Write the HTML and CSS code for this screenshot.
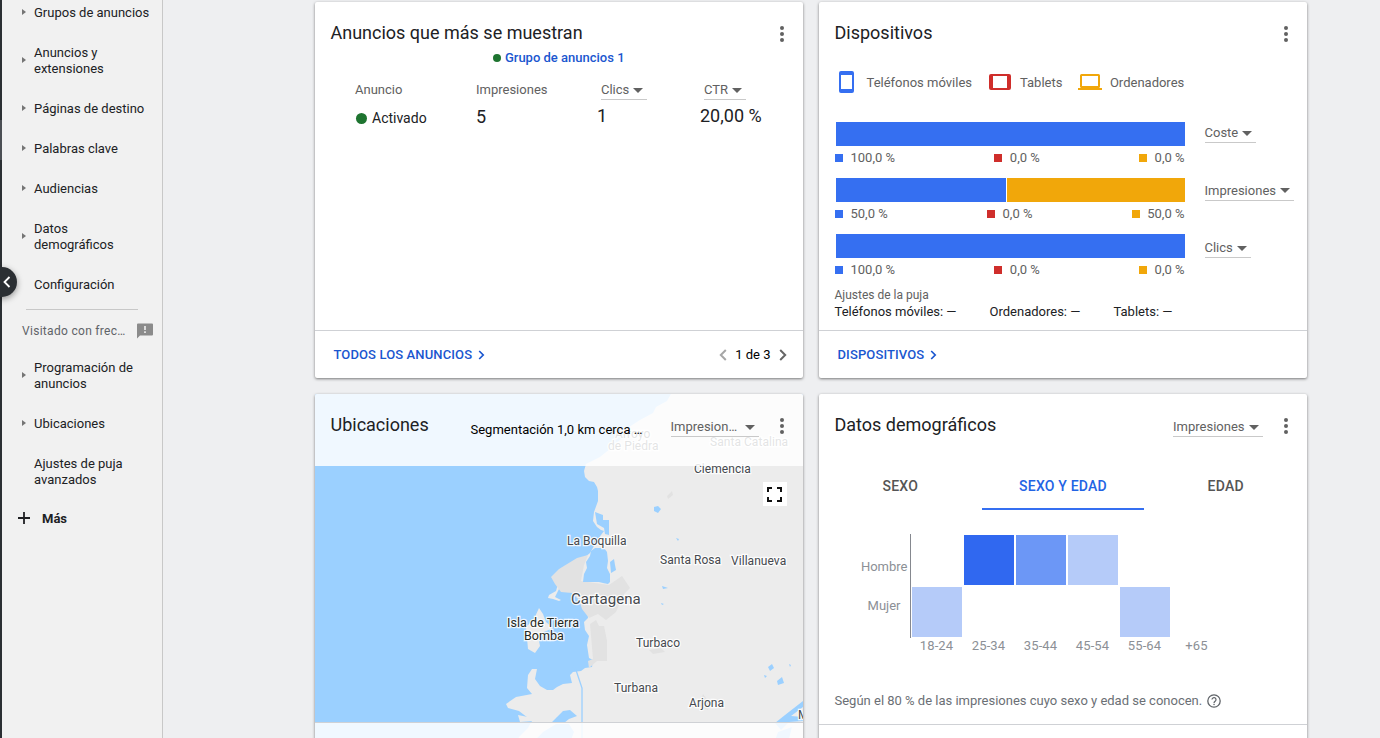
FILE: index.html
```html
<!DOCTYPE html>
<html lang="es">
<head>
<meta charset="utf-8">
<title>Vista general</title>
<link rel="stylesheet" href="styles.css">
</head>
<body>
<div class="app">
  <div class="rail"><div class="rail-mark"></div></div>
  <nav class="side">
    <ul class="menu">
      <li class="has-arrow">Grupos de anuncios</li>
      <li class="has-arrow two">Anuncios y extensiones</li>
      <li class="has-arrow">Páginas de destino</li>
      <li class="has-arrow">Palabras clave</li>
      <li class="has-arrow">Audiencias</li>
      <li class="has-arrow two">Datos demográficos</li>
      <li>Configuración</li>
    </ul>
    <div class="side-rule"></div>
    <div class="visited"><span>Visitado con frec…</span>
      <svg width="16" height="16" viewBox="0 0 16 16"><path fill="#8b8b8b" d="M1 .5h14a1 1 0 0 1 1 1v10a1 1 0 0 1-1 1H3L0 15.500V1.500a1 1 0 0 1 1-1z"/><path fill="#f1f1f1" d="M7.200 3h1.600v4H7.200zM7.200 8.300h1.600v1.600H7.200z"/></svg>
    </div>
    <ul class="menu">
      <li class="has-arrow two">Programación de anuncios</li>
      <li class="has-arrow">Ubicaciones</li>
      <li class="two">Ajustes de puja avanzados</li>
    </ul>
    <div class="more"><svg width="12" height="12" viewBox="0 0 12 12"><path d="M6 0v12M0 6h12" stroke="#202124" stroke-width="1.800"/></svg><span>Más</span></div>
  </nav>
  <button class="collapse" aria-label="Contraer"><svg width="8" height="12" viewBox="0 0 8 12"><path d="M6.500 1L1.500 6l5 5" fill="none" stroke="#fff" stroke-width="1.800"/></svg></button>

  <main class="board">
    <section class="card">
      <header class="card-head"><h2>Anuncios que más se muestran</h2><span class="dots"><i></i><i></i><i></i></span></header>
      <div class="group"><i class="dot small"></i><b>Grupo de anuncios 1</b></div>
      <div class="ads">
        <span>Anuncio</span><span>Impresiones</span>
        <span class="inset"><span class="drop">Clics</span></span><span class="inset"><span class="drop">CTR</span></span>
        <span class="status"><i class="dot"></i>Activado</span><span class="num five">5</span><span class="num">1</span><span class="num">20,00 %</span>
      </div>
      <footer class="card-foot">
        <a>TODOS LOS ANUNCIOS<svg width="7" height="10" viewBox="0 0 7 10"><path d="M1.200 1l4 4-4 4" fill="none" stroke="currentColor" stroke-width="1.700"/></svg></a>
        <div class="pager"><svg width="8" height="12" viewBox="0 0 8 12"><path d="M6.800 1L1.800 6l5 5" fill="none" stroke="#a6a6a6" stroke-width="2"/></svg><span>1 de 3</span><svg width="8" height="12" viewBox="0 0 8 12"><path d="M1.200 1l5 5-5 5" fill="none" stroke="#666" stroke-width="2"/></svg></div>
      </footer>
    </section>

    <section class="card">
      <header class="card-head"><h2>Dispositivos</h2><span class="dots"><i></i><i></i><i></i></span></header>
      <div class="devices">
        <svg width="15" height="22" viewBox="0 0 15 22"><path fill="#356ff1" fill-rule="evenodd" d="M2 0h11a2 2 0 0 1 2 2v18a2 2 0 0 1-2 2H2a2 2 0 0 1-2-2V2a2 2 0 0 1 2-2zM2 4v14h11V4z"/></svg>
        <span class="l1">Teléfonos móviles</span>
        <svg width="22" height="16" viewBox="0 0 22 16"><path fill="#cf2e2b" fill-rule="evenodd" d="M2 0h18a2 2 0 0 1 2 2v12a2 2 0 0 1-2 2H2a2 2 0 0 1-2-2V2a2 2 0 0 1 2-2zM4 2v12h14V2z"/></svg>
        <span class="l2">Tablets</span>
        <svg width="24" height="16" viewBox="0 0 24 16"><path fill="#f1a70a" fill-rule="evenodd" d="M3.500 0h17a1.500 1.500 0 0 1 1.500 1.500v11a1.500 1.500 0 0 1-1.500 1.500H24v2H0v-2h3.500A1.500 1.500 0 0 1 2 12.500v-11A1.500 1.500 0 0 1 3.500 0zM4 2v10h16V2z"/></svg>
        <span class="l3">Ordenadores</span>
      </div>
      <div class="metrics">
        <div class="bars">
          <div class="bar"><i class="blue" style="flex-grow:1"></i></div>
          <div class="legend"><span class="blue">100,0 %</span><span class="red">0,0 %</span><span class="gold">0,0 %</span></div>
          <div class="bar"><i class="blue" style="flex-grow:170"></i><i class="gold" style="flex-grow:178"></i></div>
          <div class="legend"><span class="blue">50,0 %</span><span class="red">0,0 %</span><span class="gold">50,0 %</span></div>
          <div class="bar"><i class="blue" style="flex-grow:1"></i></div>
          <div class="legend"><span class="blue">100,0 %</span><span class="red">0,0 %</span><span class="gold">0,0 %</span></div>
        </div>
        <div class="picks"><span class="drop">Coste</span><span class="drop">Impresiones</span><span class="drop">Clics</span></div>
      </div>
      <div class="bids"><p>Ajustes de la puja</p><div class="bid-row"><span>Teléfonos móviles: —</span><span>Ordenadores: —</span><span>Tablets: —</span></div></div>
      <footer class="card-foot">
        <a>DISPOSITIVOS<svg width="7" height="10" viewBox="0 0 7 10"><path d="M1.200 1l4 4-4 4" fill="none" stroke="currentColor" stroke-width="1.700"/></svg></a>
      </footer>
    </section>

    <section class="card map-card">
      <svg class="map" width="488" height="360" viewBox="315 394 488 360">
        <rect x="315" y="394" width="488" height="360" fill="#9bd0ff"/>
        <path fill="#ececec" d="M671 394L667 401 656 407 653 413 640 420 626 429 622 438 610 449 600 457 586 464 584 471 585 477 589 481 594 482 597 487 598 491 598 501 594 512 593 521 597 527 601 530 604 531 598 539 590 553 579 562 568 569 556 575 555 580 558 584 556 591 549 595 548 598 553 599 559 601 561 600 555 597 559 589 558 583 562 580 566 583 565 585 567 589 576 590 578 588 574 584 577 585 580 590 583 597 583 601 587 608 588 618 584 622 585 630 589 636 587 645 589 658 593 660 592 667 585 668 581 671 573 672 570 675 572 683 563 684 557 687 553 690 547 690 540 686 535 679 537 669 532 669 528 675 527 688 532 694 516 697 506 704 508 708 519 711 532 721 528 728 519 737 515 754H803V394z"/>
        <path fill="#ececec" d="M539 608l4 6 3 8 7 6-9 4-5 9 1 5-5 7-7-4-2-22 8-8zM518 715l10 2 6 4-14 1z"/>
        <g fill="#e2e2e2"><path d="M588 555l-4 10-3 16 28 4 13-9 8 12-6 6-8 18-10 8-8-6-9 4-7-9-3-9-7-7-11-1-6-8-4-7 8-8 18-11z"/><path d="M590 624l6-4 3 6 5 0 3 15v20h-10l-8 7-1-7 5-2z"/><path d="M667 496l5-5 1 4-5 4zM649 650l12-2 4 4-12 2zM698 706l5-12 7 10-2 6z"/></g>
        <g fill="#9bd0ff"><path d="M595 512l8 3 0 5 6 0v15l-4-1-1-6-7-4z"/><path d="M591 551l4-3 9 0 3 4 1 9-1 7 3 6 0 8-2 2-5-1-4-1-16 0 1-8 3-6-1-6 4-6z"/><path d="M610 562l4-3 1 6 1 5-5 3zM654 507l4-1 3 3-3 4-4-2zM676 538l3 1-1 2zM662 586l6 2-5 1zM661 603l3 1-2 1zM768 667l4-3 2 4-4 3zM777 681l5-4 2 6-6 2zM764 675l3 1-2 2zM789 664l2 1-1 2z"/><path d="M551 723l6-6 6-6 7-1 7 6-8 3-5 4z"/><path d="M573 666l3 4 6 18v50" fill="none" stroke="#9bd0ff" stroke-width="1.300"/><path d="M775 723l10-8 18-14v6l-12 9 12 1v4l-14 1-8 8z"/><path d="M533 742l10-10 13-8 13 0 5 8-8 22h-34zM770 754l8-22 14-5-3 12z"/></g>
        <g class="place">
          <text x="615" y="438">Arroyo</text><text x="608" y="450.400">de Piedra</text><text x="710" y="446">Santa Catalina</text><text x="694" y="473">Clemencia</text><text x="567" y="545.400">La Boquilla</text><text x="660" y="564.400">Santa Rosa</text><text x="731" y="565.400">Villanueva</text><text x="636" y="647.400">Turbaco</text><text x="614" y="692.400">Turbana</text><text x="689" y="707.400">Arjona</text><text x="798" y="719">M</text>
          <text class="isle" x="507" y="627.400">Isla de Tierra</text><text class="isle" x="524" y="640.400">Bomba</text><text class="city" x="571" y="604.400">Cartagena</text>
        </g>
      </svg>
      <header class="card-head veil"><h2>Ubicaciones</h2><span class="segment">Segmentación 1,0 km cerca …</span><span class="drop wide">Impresion…</span><span class="dots"><i></i><i></i><i></i></span></header>
      <div class="full"><svg width="15" height="15" viewBox="0 0 15 15"><path d="M1 5V1h4M10 1h4v4M14 10v4h-4M5 14H1v-4" fill="none" stroke="#111" stroke-width="2"/></svg></div>
      <div class="map-foot"></div>
    </section>

    <section class="card">
      <header class="card-head"><h2>Datos demográficos</h2><span class="drop">Impresiones</span><span class="dots"><i></i><i></i><i></i></span></header>
      <div class="tabs"><span>SEXO</span><span class="on">SEXO Y EDAD</span><span>EDAD</span></div>
      <div class="chart">
        <div class="ylab"><span>Hombre</span><span class="m">Mujer</span></div>
        <div class="heat">
          <i></i><i class="h3"></i><i class="h2"></i><i class="h1"></i><i></i><i></i>
          <i class="h1"></i><i></i><i></i><i></i><i class="h1"></i><i></i>
        </div>
        <div class="xlab"><span>18-24</span><span>25-34</span><span>35-44</span><span>45-54</span><span>55-64</span><span>+65</span></div>
      </div>
      <div class="note">Según el 80 % de las impresiones cuyo sexo y edad se conocen.
        <svg width="14" height="14" viewBox="0 0 14 14"><circle cx="7" cy="7" r="6.200" fill="none" stroke="#5f6368" stroke-width="1.300"/><path d="M5 5.600a2 2 0 1 1 3.300 1.500C7.500 7.700 7 8 7 8.900" fill="none" stroke="#5f6368" stroke-width="1.200"/><rect x="6.400" y="9.800" width="1.300" height="1.300" fill="#5f6368"/></svg>
      </div>
      <div class="end"></div>
    </section>
  </main>
</div>
</body>
</html>
```

FILE: styles.css
```css
* { box-sizing: border-box; }
body { margin: 0; height: 738px; overflow: hidden; background: #eeeff1; font: 13px/16px Roboto, "Liberation Sans", sans-serif; color: #202124; }
h2, p, ul { margin: 0; padding: 0; list-style: none; }
svg { display: block; flex: none; }
.app { position: relative; display: flex; height: 738px; }

.rail { width: 2px; padding-top: 120px; background: #2b2f33; }
.rail-mark { height: 40px; background: #4b4f54; }
.side { width: 161px; border-right: 1px solid #c8c8c8; background: #f1f1f1; overflow: hidden; }
.side > .menu:first-child { margin-top: -7px; }
.menu li { display: flex; align-items: center; position: relative; height: 40px; padding: 0 22px 0 32px; white-space: nowrap; }
.menu li.two { height: 56px; white-space: normal; }
.has-arrow::before { content: ""; position: absolute; left: 20px; top: calc(50% - 4px); border: 3.500px solid transparent; border-left: 4px solid #757575; border-right: 0; }
.side-rule { margin: 4px 24px 0; height: 1px; background: #c8c8c8; }
.visited { display: flex; align-items: center; justify-content: space-between; height: 38px; padding: 4px 9px 0 20px; font-size: 12px; letter-spacing: .3px; color: #5f6368; }
.more { display: flex; align-items: center; gap: 12px; height: 38px; padding-left: 16px; font-weight: 700; }
.more svg { margin-top: -2px; }
.collapse { position: absolute; left: -13px; top: 267px; width: 30px; height: 30px; border: 0; padding: 0 0 0 16px; border-radius: 50%; background: #2b2f33; box-shadow: 0 2px 6px rgba(0,0,0,.4); }

.board { display: grid; grid-template-columns: 488px 488px; grid-template-rows: 376px 360px; gap: 16px; padding: 2px 0 0 152px; }
.card { display: flex; flex-direction: column; overflow: hidden; border-radius: 2px; background: #fff; box-shadow: 0 1px 3px rgba(0,0,0,.5); }
.card-head { display: flex; flex: none; height: 43px; padding: 19px 17px 0 15.500px; }
h2 { flex: 1; font-size: 18px; font-weight: 400; line-height: 24px; white-space: nowrap; }
.dots { display: flex; flex-direction: column; gap: 2px; padding-top: 5px; width: 8px; align-items: center; }
.dots i { width: 4px; height: 4px; border-radius: 50%; background: #616161; }
.drop { display: inline-flex; align-items: center; gap: 4px; height: 18px; padding: 0 4px 1px 0; border-bottom: 1px solid #c9c9c9; color: #616161; white-space: nowrap; }
.drop::after { content: ""; border: 5px solid transparent; border-top-color: #616161; border-bottom: 0; }
.card-foot { display: flex; align-items: center; justify-content: space-between; height: 48px; margin-top: auto; padding: 0 16px 0 18.500px; border-top: 1px solid #cfd1d5; }
.card-foot a { display: flex; align-items: center; gap: 6px; font-weight: 500; letter-spacing: .12px; color: #1a56cf; }
.pager { display: flex; align-items: center; gap: 8.500px; color: #000; }

.group { display: flex; justify-content: center; align-items: center; gap: 3.500px; margin-top: 5px; color: #1a56cf; }
.group b { font-weight: 500; }
.dot { width: 11px; height: 11px; margin-right: 5px; border-radius: 50%; background: #1e7430; }
.dot.small { width: 8px; height: 8px; margin: 0; }
.ads { display: grid; grid-template-columns: 121px 121px 103px auto; grid-template-rows: 18px 24px; row-gap: 5px; margin: 15px 0 0 40px; color: #616161; line-height: 18px; }
.inset { padding-left: 4px; }
.status { display: flex; align-items: center; padding: 4px 0 0 1px; font-size: 14px; color: #202124; }
.num { font-size: 18px; line-height: 24px; color: #202124; }
.five { padding-top: 1px; }

.devices { display: flex; align-items: center; height: 24px; margin: 25px 0 0 20px; color: #616161; }
.devices span { padding-top: 2px; }
.l1 { margin: 0 17.500px 0 12.500px; }
.l2 { margin: 0 15.500px 0 8.500px; }
.l3 { margin-left: 8px; }
.metrics { display: flex; gap: 19.500px; margin: 28px 0 0 16px; }
.bars { width: 350px; }
.bar { display: flex; gap: 1px; height: 24px; margin-left: 1px; }
.blue { --c: #356ff1; }
.red { --c: #cf2e2b; }
.gold { --c: #f1a70a; }
.bar i { flex-basis: 0; background: var(--c); }
.legend { display: flex; justify-content: space-between; height: 32px; padding: 4px .5px 0 0; color: #616161; }
.legend span { display: flex; gap: 7.500px; height: 16px; align-items: center; }
.legend span::before { content: ""; width: 8px; height: 8px; background: var(--c); }
.picks { display: flex; flex-direction: column; align-items: flex-start; gap: 39.500px; padding-top: 3px; }
.bids { padding: 0 15.500px; margin-top: -3px; }
.bids p { font-size: 12px; color: #616161; }
.bid-row { display: grid; grid-template-columns: 155px 124px auto; padding-top: 1px; }

.map-card { position: relative; }
.map { position: absolute; left: 0; top: 0; }
.veil { position: relative; height: 72px; background: rgba(255,255,255,.85); }
.veil h2 { flex: 0 0 140px; }
.segment { width: 200px; padding-top: 9px; color: #000; white-space: nowrap; }
.card-head .drop { margin: 6px 19.500px 0 0; }
.card-head .wide { width: 88px; justify-content: space-between; }
.full { position: absolute; right: 16px; top: 88px; display: grid; place-items: center; width: 24px; height: 24px; padding-right: 1px; background: #fff; }
.map-foot { position: absolute; left: 0; right: 0; top: 328px; height: 40px; border-top: 1px solid #cfd1d5; background: rgba(255,255,255,.85); }
.place { font-size: 12px; letter-spacing: .05px; fill: #45494e; stroke: #fff; stroke-width: 2.500px; stroke-opacity: .85; paint-order: stroke; }
.city { font-size: 15px; }
.isle { font-size: 12.500px; fill: #26291d; }

.tabs { display: grid; grid-template-columns: repeat(3, 1fr); grid-template-rows: 48px; margin-top: 25px; line-height: 49px; font-size: 14px; font-weight: 500; letter-spacing: .2px; text-align: center; color: #555; }
.tabs .on { border-bottom: 2px solid #356ff1; color: #2364e4; }
.chart { display: grid; grid-template-columns: 92px 320px; grid-template-rows: 104px 16px; margin-top: 24px; color: #8c9096; }
.ylab { display: flex; flex-direction: column; gap: 23px; align-items: flex-end; padding: 25px 3.500px 0 0; }
.ylab .m { padding-right: 7px; }
.heat { display: grid; grid-template-columns: repeat(6, 50px); grid-auto-rows: 50px; gap: 2px; margin-left: -1px; padding: 1px 0 0 1px; border-left: 1px solid #85888f; }
.h1 { background: #b5cbf9; }
.h2 { background: #6c97f6; }
.h3 { background: #3068f0; }
.xlab { grid-column: 2; display: grid; grid-template-columns: repeat(6, 52px); text-align: center; letter-spacing: .1px; margin-left: -.5px; }
.note { display: flex; align-items: center; gap: 5px; margin: 39px 0 0 15.500px; color: #6b6f75; white-space: nowrap; }
.end { margin-top: 15px; border-top: 1px solid #cfd1d5; }
```
